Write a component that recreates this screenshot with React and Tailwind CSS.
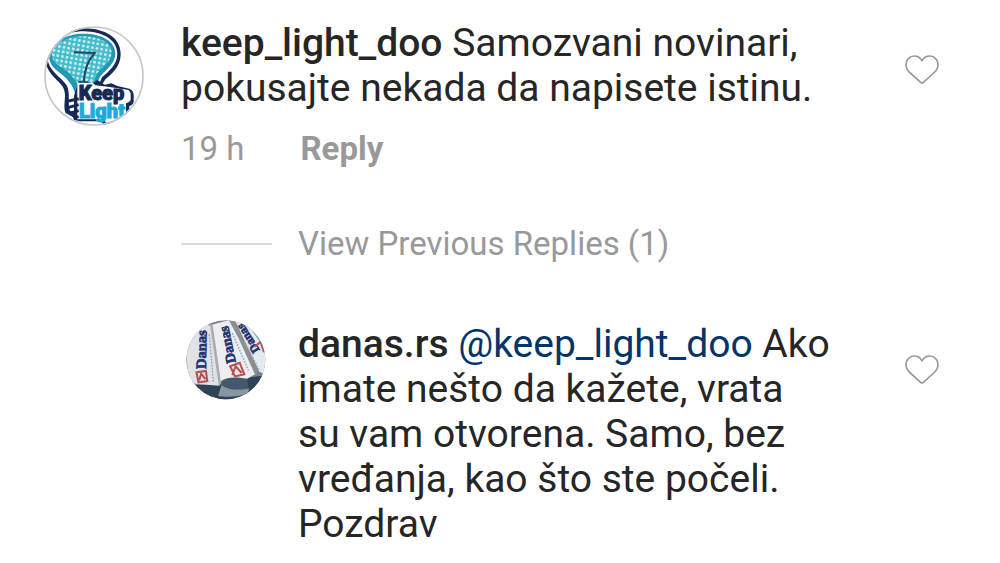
import { useState } from "react";

const COMMENT = {
  user: "keep_light_doo",
  text: "Samozvani novinari, pokusajte nekada da napisete istinu.",
  age: "19 h",
};

const REPLY = {
  user: "danas.rs",
  mention: "keep_light_doo",
  text: "Ako imate nešto da kažete, vrata su vam otvorena. Samo, bez vređanja, kao što ste počeli. Pozdrav",
};

function LikeButton({ label }) {
  const [liked, setLiked] = useState(false);

  return (
    <button
      type="button"
      aria-label={label}
      aria-pressed={liked}
      onClick={() => setLiked(!liked)}
      className="shrink-0 cursor-pointer"
    >
      <svg viewBox="42 42 108 96" className="w-9 h-8" fill={liked ? "#ed4956" : "none"}>
        <path
          d="M96 63C91 53 83 48 73 48C58 48 48 60 48 74C48 85 53 92 61 99L92 127Q96 131 100 127L131 99C139 92 144 85 144 74C144 60 134 48 119 48C109 48 101 53 96 63Z"
          stroke={liked ? "#ed4956" : "#999999"}
          strokeWidth="5"
          strokeLinejoin="round"
        />
      </svg>
    </button>
  );
}

function KeepLightAvatar() {
  return (
    <svg viewBox="30 30 300 300" className="size-[100px] shrink-0" role="img" aria-label="keep_light_doo">
      <defs>
        <clipPath id="keep-circle">
          <circle cx="180" cy="180" r="149" />
        </clipPath>
        <pattern id="keep-mesh" width="14" height="14" patternUnits="userSpaceOnUse" patternTransform="rotate(10)">
          <rect width="14" height="14" fill="#45bccb" />
          <rect x="3" y="3" width="8" height="8" rx="3" fill="#d3f3f4" />
        </pattern>
      </defs>
      <circle cx="180" cy="180" r="149" fill="#ffffff" />
      <g clipPath="url(#keep-circle)">
        {/* Bulb outline, white gap, glass */}
        <path
          d="M32 118C38 62 92 36 150 37C216 38 260 66 260 114C260 150 236 172 214 190L200 212H132V312L94 290C86 262 100 240 88 216C74 190 34 176 32 118Z"
          fill="#152a54"
        />
        <path
          d="M40 118C46 72 94 46 150 46C208 47 250 72 250 114C250 146 224 166 204 184L192 212H140V300L108 284C100 262 110 232 98 208C80 180 40 166 40 118Z"
          fill="#ffffff"
        />
        <path
          d="M46 116C52 76 98 53 148 53C204 53 245 76 244 114C243 144 216 160 200 180C192 192 190 202 186 216H136V240H124C122 222 114 206 98 188C76 166 42 152 46 116Z"
          fill="#2498b2"
        />
        <path
          d="M54 112C60 82 102 61 148 61C196 61 234 80 233 110C232 137 206 151 190 171C182 184 180 200 176 214H136C132 202 122 190 110 176C92 156 50 144 54 112Z"
          fill="url(#keep-mesh)"
        />
        <path d="M120 109L182 111C162 132 152 158 149 196" fill="none" stroke="#234669" strokeWidth="6" />

        {/* Wordmark plate */}
        <path
          d="M134 196H160L172 204L190 192L212 206L232 202L250 210L286 218Q300 224 299 240V258Q296 268 286 270V300Q284 314 268 316L250 330H214L200 316H138L120 312V240Z"
          fill="#152a54"
        />
        <path
          d="M130 200H176L184 208L222 212L284 222Q291 228 290 240V252Q287 260 276 262V298Q274 308 262 308L246 322H218L206 310H130V262H130Z"
          fill="#ffffff"
        />

        {/* Bulb base */}
        <path d="M100 256L134 248M104 274L134 266M106 292L134 284M118 306L134 302" stroke="#152a54" strokeWidth="9" />

        <g fontFamily="Roboto, sans-serif" fontWeight="900" fontSize="60" strokeWidth="3">
          <text x="134" y="251" fill="#152a54" stroke="#152a54">Keep</text>
          <text x="135" y="306" fill="#20a9d8" stroke="#20a9d8">Light</text>
        </g>
      </g>
      <circle cx="180" cy="180" r="147" fill="none" stroke="#c4c6ca" strokeWidth="5" />
    </svg>
  );
}

function DanasAvatar() {
  return (
    <svg viewBox="33 33 237 237" className="size-20 shrink-0" role="img" aria-label="danas.rs">
      <defs>
        <clipPath id="danas-circle">
          <circle cx="151" cy="151" r="117" />
        </clipPath>
      </defs>
      <g clipPath="url(#danas-circle)">
        <rect x="30" y="30" width="245" height="245" fill="#7d8388" />
        <path d="M30 224L130 226L200 206L275 196V275H30Z" fill="#2f4357" />

        {/* Left paper */}
        <path d="M30 90L66 58L98 46L118 60L132 228L60 222L40 205Z" fill="#dfe2e6" />
        <path d="M104 44L118 50L140 218L130 228Z" fill="#a9adb1" />
        <path d="M102 76L114 216" stroke="#9aa0a6" strokeWidth="4" strokeDasharray="5 4" />

        {/* Middle paper */}
        <path d="M112 46L160 34L186 62L240 192L214 207L166 206L137 220Z" fill="#eceef1" />
        <path d="M160 34L178 38L246 184L238 196L190 90Z" fill="#8a8f94" />
        <path d="M170 72L218 182" stroke="#a7acb1" strokeWidth="5" strokeDasharray="5 4" />
        <path d="M137 214C156 200 190 202 214 208L218 236C190 242 158 238 138 226Z" fill="#43586d" />
        <path d="M138 226C160 240 190 242 220 236L216 250C188 262 150 262 128 258Z" fill="#8995a1" />

        {/* Right paper */}
        <path d="M178 34H222L275 110V196L250 186Z" fill="#e6e9ed" />
        <path d="M226 60L272 130V100L240 56Z" fill="#9aa0a6" />
        <path d="M206 96L252 184" stroke="#a7acb1" strokeWidth="4" strokeDasharray="5 4" />

        <g fontFamily="Liberation Serif, serif" fontWeight="700" fill="#23356f" stroke="#23356f" strokeWidth="2">
          <text fontSize="43" transform="translate(92 178) rotate(-89)">Danas</text>
          <text fontSize="42" transform="translate(181 158) rotate(-102)">Danas</text>
          <text fontSize="36" transform="translate(252 122) rotate(-122)">Danas</text>
        </g>

        {/* Red emblems */}
        <g fill="none" stroke="#b8514f" strokeWidth="6">
          <path d="M64 188L92 184L96 214L70 218ZM72 212L78 192L90 208" />
          <path d="M164 170L192 160L206 194L178 200ZM170 196L180 170L198 190" />
          <path d="M236 112L254 98L264 128" />
        </g>
      </g>
    </svg>
  );
}

export default function App() {
  return (
    <main className="min-h-screen bg-white font-[Roboto,sans-serif] text-[#262626]">
      <article className="flex items-start pt-5 pl-11 pr-15">
        <div className="pt-[6px] pr-[37px]">
          <KeepLightAvatar />
        </div>
        <div className="flex-1 min-w-0 pt-px">
          <p className="max-w-[660px] text-[39px] leading-[45px]">
            <a href="#keep_light_doo" className="font-medium">{COMMENT.user}</a> {COMMENT.text}
          </p>
          <div className="flex gap-14 pt-[18px] text-[33px] leading-10 text-[#999999]">
            <span>{COMMENT.age}</span>
            <button type="button" className="font-bold cursor-pointer">Reply</button>
          </div>
        </div>
        <div className="pt-[34px]">
          <LikeButton label="Like comment by keep_light_doo" />
        </div>
      </article>

      <button
        type="button"
        className="flex items-center gap-[26px] mt-[55px] ml-[181px] text-[33px] leading-10 text-[#999999] cursor-pointer"
      >
        <span className="w-[91px] h-[2px] bg-[#dbdbdb]" />
        View Previous Replies (1)
      </button>

      <article className="flex items-start pt-14 pl-[186px] pr-15">
        <div className="pr-8">
          <DanasAvatar />
        </div>
        <div className="flex-1 min-w-0 pt-[2px]">
          <p className="max-w-[533px] text-[39px] leading-[45px]">
            <a href="#danas.rs" className="font-medium">{REPLY.user}</a>{" "}
            <a href="#keep_light_doo" className="text-[#003569]">@{REPLY.mention}</a> {REPLY.text}
          </p>
        </div>
        <div className="pt-[34px]">
          <LikeButton label="Like reply by danas.rs" />
        </div>
      </article>
    </main>
  );
}
